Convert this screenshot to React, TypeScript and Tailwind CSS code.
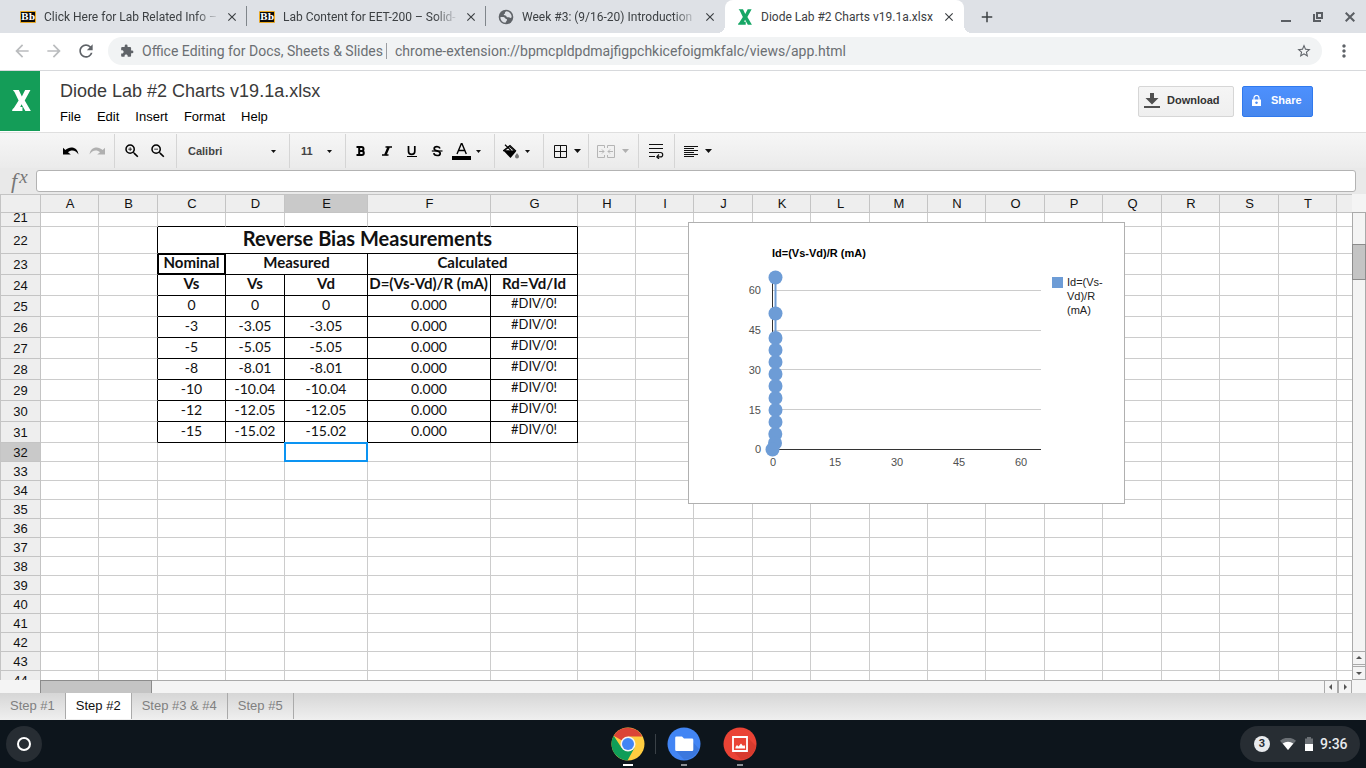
import React from "react";
import {
  MdArrowBack,
  MdArrowForward,
  MdRefresh,
  MdExtension,
  MdStarBorder,
  MdMoreVert,
  MdZoomIn,
  MdZoomOut,
  MdClose,
  MdAdd,
} from "react-icons/md";

/* ---------- Browser window ---------- */

function BlackboardIcon() {
  return (
    <svg width="16" height="12" viewBox="0 0 16 12" aria-hidden="true">
      <rect x="0.5" y="0.5" width="15" height="11" rx="0.5" fill="#0b0b0b" stroke="#eba91f" />
      <text x="8" y="9.3" textAnchor="middle" fontSize="9" fontWeight="700" fill="#fff" fontFamily="'DejaVu Serif', serif">
        Bb
      </text>
    </svg>
  );
}

function GlobeIcon() {
  return (
    <svg width="16" height="16" viewBox="0 0 16 16" aria-hidden="true">
      <circle cx="8" cy="8" r="7.300" fill="#5f6368" />
      <path d="M8.600 2.200c-1.200.3-1.700 1-1.600 1.700.1.700-.6.900-1.100 1.300-.4.400.1 1.300.9 1.300 1 0 1.500.2 1.700.9.200.8 1 .9 1.900.8.900-.1 1.200.7 2 .7.600 0 1-.4 1.300-.9a5.800 5.800 0 0 0-5.100-5.800z" fill="#dee1e6" />
      <path d="M2.300 8.300c1.400-.5 3-.6 4.200.1 1 .6 1 1.400 1.900 1.700.8.300.8 1.300.1 1.900-.7.500-.6 1.300-1.200 1.800a5.800 5.800 0 0 1-5-5.500z" fill="#dee1e6" />
    </svg>
  );
}

function XMark({ color, className }: { color: string; className: string }) {
  return (
    <svg viewBox="0 0 18.5 20.5" className={className} fill={color} aria-hidden="true">
      <path d="M.8 0H6.600L9.600 6.300 12.800 0H18L12.400 10.200 18.400 20.400H13L9.300 14 8 16.600H10.200V20.400H0L.6 18.600 1.800 17.600 6.400 10.200 2.400 2z" />
    </svg>
  );
}

type Tab = { title: string; icon: React.ReactNode; active?: boolean; divider?: boolean };

const tabs: Tab[] = [
  { title: "Click Here for Lab Related Info –", icon: <BlackboardIcon />, divider: true },
  { title: "Lab Content for EET-200 – Solid-", icon: <BlackboardIcon />, divider: true },
  { title: "Week #3: (9/16-20) Introduction", icon: <GlobeIcon /> },
  { title: "Diode Lab #2 Charts v19.1a.xlsx", icon: <XMark color="#16a765" className="h-4 w-[14px]" />, active: true },
];

function TabStrip() {
  return (
    <div className="flex h-[33px] shrink-0 items-stretch bg-[#dee1e6] pl-2 text-[#3c4043]">
      {tabs.map((t) => (
        <div
          key={t.title}
          className={
            t.active
              ? "relative flex w-[239px] items-center rounded-t-lg bg-white pr-[7px] pl-3"
              : "relative flex w-[239px] items-center pr-[7px] pl-3"
          }
        >
          {t.active && (
            <>
              <span className="absolute bottom-0 -left-2 size-2 bg-[radial-gradient(circle_at_0_0,#dee1e6_8px,#fff_8px)]" />
              <span className="absolute -right-2 bottom-0 size-2 bg-[radial-gradient(circle_at_100%_0,#dee1e6_8px,#fff_8px)]" />
            </>
          )}
          <span className="flex w-4 shrink-0 justify-center">{t.icon}</span>
          <span
            className={
              t.active
                ? "ml-2 min-w-0 flex-1 text-[12px] leading-5 whitespace-nowrap"
                : "ml-2 min-w-0 flex-1 text-[12px] leading-5 whitespace-nowrap [mask-image:linear-gradient(to_right,#000_86%,transparent)]"
            }
          >
            {t.title}
          </span>
          <button aria-label={"Close " + t.title} className="ml-1 flex size-4 shrink-0 items-center justify-center">
            <MdClose className="size-[14px]" />
          </button>
          {t.divider && <span className="absolute top-[6px] right-0 h-5 w-px bg-[#80868b]" />}
        </div>
      ))}
      <button aria-label="New tab" className="ml-[13px] flex w-5 items-center justify-center">
        <MdAdd className="size-[18px]" />
      </button>
      <div className="ml-auto flex items-center gap-4 pr-2 text-[#5a5e63]">
        <button aria-label="Minimize" className="flex size-4 items-center justify-center">
          <svg width="10" height="10" viewBox="0 0 10 10"><path d="M0 8h10v2H0z" fill="currentColor" /></svg>
        </button>
        <button aria-label="Restore" className="flex size-4 items-center justify-center">
          <svg width="10" height="10" viewBox="0 0 10 10" fill="none" stroke="currentColor" strokeWidth="2">
            <path d="M4 1h5v5H4zM1 2v7h7" />
          </svg>
        </button>
        <button aria-label="Close window" className="flex size-4 items-center justify-center">
          <svg width="10" height="10" viewBox="0 0 10 10" stroke="currentColor" strokeWidth="2"><path d="M.7.7l8.600 8.600M9.300.7L.7 9.300" /></svg>
        </button>
      </div>
    </div>
  );
}

function AddressRow() {
  return (
    <div className="flex h-[38px] shrink-0 items-center border-b border-[#d7d9dc] bg-white px-3 pb-px">
      <button aria-label="Back" className="flex w-5 justify-center text-[#babcbe]"><MdArrowBack className="size-5" /></button>
      <button aria-label="Forward" className="ml-3 flex w-5 justify-center text-[#babcbe]"><MdArrowForward className="size-5" /></button>
      <button aria-label="Reload" className="ml-3 flex w-5 justify-center text-[#5f6368]"><MdRefresh className="size-5" /></button>
      <div className="ml-3 flex h-7 flex-1 items-center rounded-full bg-[#f1f3f4] px-3 text-sm text-[#6b6f73]">
        <MdExtension className="size-[14px] text-[#5f6368]" />
        <span className="ml-2 whitespace-nowrap">Office Editing for Docs, Sheets &amp; Slides</span>
        <span className="ml-[3px] h-4 w-px bg-[#9a9da1]" />
        <input
          aria-label="Address"
          className="ml-2 min-w-0 flex-1 bg-transparent outline-none"
          defaultValue="chrome-extension://bpmcpldpdmajfigpchkicefoigmkfalc/views/app.html"
        />
        <button aria-label="Bookmark" className="-mr-0.5"><MdStarBorder className="size-4 text-[#5f6368]" /></button>
      </div>
      <button aria-label="Browser menu" className="ml-3 flex w-5 justify-center text-[#5f6368]"><MdMoreVert className="size-5" /></button>
    </div>
  );
}

/* ---------- Document header ---------- */

function DocHeader() {
  return (
    <header className="flex h-[61px] shrink-0 items-start bg-white">
      <div className="flex h-[60px] w-10 shrink-0 items-center justify-center bg-[#149d58] pb-0.5 pl-0.5">
        <XMark color="#fff" className="h-[21px] w-[19px]" />
      </div>
      <div className="ml-5 flex-1 pt-2">
        <h1 className="text-[18px] leading-6 text-[#3a3a3a]">Diode Lab #2 Charts v19.1a.xlsx</h1>
        <nav className="mt-1 flex gap-4 text-[13px] leading-5 text-black">
          {["File", "Edit", "Insert", "Format", "Help"].map((m) => (
            <button key={m}>{m}</button>
          ))}
        </nav>
      </div>
      <div className="flex gap-2 pt-[15px] pr-[53px] text-[11px] font-bold">
        <button className="flex h-[31px] w-[96px] items-center rounded-[2px] border border-[#d6d6d6] bg-linear-to-b from-[#f5f5f5] to-[#efefef] pb-0.5 pl-[5px] text-[#333]">
          <svg width="16" height="16" viewBox="0 0 16 16" fill="#505050" aria-hidden="true">
            <path d="M6 0h4v5h4.500L8 11.500 1.500 5H6zM0 13h16v2H0z" />
          </svg>
          <span className="ml-[7px]">Download</span>
        </button>
        <button className="flex h-[31px] w-[71px] items-center rounded-[2px] border border-[#3079ed] bg-linear-to-b from-[#4d90fe] to-[#4787ed] pb-0.5 pl-[9px] text-white">
          <svg width="9" height="11" viewBox="0 0 9 11" fill="#fff" aria-hidden="true">
            <path d="M2 5V3a2.500 2.500 0 0 1 5 0v2" fill="none" stroke="#fff" strokeWidth="1.200" />
            <path fillRule="evenodd" d="M0 4.500h9V11H0zM4.500 6.400a1.300 1.300 0 1 0 .01 0z" />
          </svg>
          <span className="ml-[10px]">Share</span>
        </button>
      </div>
    </header>
  );
}

/* ---------- Toolbar ---------- */

function Caret({ light }: { light?: boolean }) {
  return (
    <svg width="7" height="4" viewBox="0 0 7 4" className={light ? "shrink-0 text-[#b0b0b0]" : "shrink-0 text-[#111]"} aria-hidden="true">
      <path d="M0 0h7L3.500 4z" fill="currentColor" />
    </svg>
  );
}

function SmallCaret() {
  return (
    <svg width="5" height="3" viewBox="0 0 5 3" className="shrink-0" aria-hidden="true">
      <path d="M0 0h5L2.500 3z" fill="#111" />
    </svg>
  );
}

function UndoShape({ className }: { className: string }) {
  return (
    <svg width="16" height="9" viewBox="0 0 16 9" fill="currentColor" className={className} aria-hidden="true">
      <path d="M0 .8L2.300 3C4.500 1 7 .2 9.300.5 12.600.9 14.800 3 15.500 7.500 13.700 4.600 11.800 3.500 9.400 3.500 7.700 3.500 6.200 4.200 5 5.200L7.800 7.600H0z" />
    </svg>
  );
}

function Toolbar() {
  return (
    <div className="flex h-9 shrink-0 items-stretch border-t border-[#dfdfdf] bg-linear-to-b from-[#f6f6f6] to-[#ebebeb] pt-px text-black">
      <div className="ml-[50px] flex w-[65px] items-center gap-[10px] border-r border-[#d5d5d5] pl-[13px]">
        <button aria-label="Undo"><UndoShape className="text-black" /></button>
        <button aria-label="Redo"><UndoShape className="-scale-x-100 text-[#b0b0b0]" /></button>
      </div>
      <div className="flex w-[62px] items-center gap-2 border-r border-[#d5d5d5] pl-2">
        <button aria-label="Zoom in"><MdZoomIn className="size-[18px]" /></button>
        <button aria-label="Zoom out"><MdZoomOut className="size-[18px]" /></button>
      </div>
      <div className="relative flex w-[113px] items-center border-r border-[#d5d5d5] pr-[13px] pl-[11px] text-[11px] font-bold text-[#444]">
        <select aria-label="Font" className="w-full appearance-none bg-transparent outline-none">
          <option>Calibri</option>
        </select>
        <SmallCaret />
      </div>
      <div className="flex w-[56px] items-center border-r border-[#d5d5d5] pr-[13px] pl-[11px] text-[11px] font-bold text-[#444]">
        <select aria-label="Font size" className="w-full appearance-none bg-transparent outline-none">
          <option>11</option>
        </select>
        <SmallCaret />
      </div>
      <div className="flex w-[149px] items-center border-r border-[#d5d5d5] pl-[3px]">
        <button aria-label="Bold" className="w-[25px]">
          <svg width="10" height="12" viewBox="0 0 10 12" className="ml-[7px]"><path d="M.5 2h5a2 2 0 0 1 0 4h-2.500h2.800a2 2 0 0 1 0 4H.5M3.200 2v8" fill="none" stroke="#000" strokeWidth="2" /></svg>
        </button>
        <button aria-label="Italic" className="w-[25px]">
          <svg width="12" height="12" viewBox="0 0 12 12" className="ml-[7px]"><path d="M4.500 2H11M1 10h6.500" stroke="#000" strokeWidth="1.300" /><path d="M7.700 2L4.300 10" stroke="#000" strokeWidth="2.400" /></svg>
        </button>
        <button aria-label="Underline" className="w-[25px]">
          <svg width="12" height="14" viewBox="0 0 12 14" className="ml-[7px]" fill="none" stroke="#000"><path d="M2.500 2v5.200a3 3 0 0 0 6.300 0V2" strokeWidth="1.700" /><path d="M1 12.500h10" /></svg>
        </button>
        <button aria-label="Strikethrough" className="w-[25px]">
          <svg width="12" height="12" viewBox="0 0 12 12" className="ml-[7px]" fill="none" stroke="#000"><path d="M9 3.600C8.600 2.300 7.600 1.700 6 1.700 4.300 1.700 3.200 2.500 3.200 3.700 3.200 6.400 9.200 5.400 9.200 8.400 9.200 9.700 8 10.500 6.200 10.500 4.300 10.500 3 9.600 2.800 8.200" strokeWidth="1.700" /><path d="M.8 6h10.700" strokeWidth="1.200" /></svg>
        </button>
        <button aria-label="Text color" className="ml-[3px] flex items-center">
          <svg width="19" height="18" viewBox="0 0 19 18"><path d="M5 12L9.300 1.700h.7L14.300 12M6.400 8.500h6.500" fill="none" stroke="#000" strokeWidth="1.400" /><path d="M0 14h19v4H0z" /></svg>
          <span className="ml-[5px]"><SmallCaret /></span>
        </button>
      </div>
      <button aria-label="Fill color" className="flex w-[49px] items-center border-r border-[#d5d5d5] pl-2">
        <svg width="17" height="15" viewBox="0 0 17 15">
          <path d="M.5 6.700L6.700 2 13 7.500 7.500 14z" fill="#000" /><path d="M2.500 6.200L6.500 3.200 10.500 6.400z" fill="#f0f0f0" /><path d="M2 .7L8 6.500M0 7L7 1.500 13 7.200" stroke="#000" strokeWidth="1.200" fill="none" />
          <path d="M14 9c1.200 1.700 2 2.600 2 3.600a2 2 0 0 1-4 0c0-1 .8-1.900 2-3.600z" fill="#777" />
        </svg>
        <span className="ml-[5px]"><SmallCaret /></span>
      </button>
      <button aria-label="Borders" className="flex w-[45px] items-center gap-[7px] border-r border-[#d5d5d5] pl-[10px]">
        <svg width="13" height="13" viewBox="0 0 13 13" fill="none" stroke="#111"><path d="M.5.5h12v12H.5zM6.500.5v12M.5 6.500h12" /></svg>
        <Caret />
      </button>
      <button aria-label="Merge cells" className="flex w-[50px] items-center gap-[7px] border-r border-[#d5d5d5] pl-2 text-[#b5b5b5]">
        <svg width="18" height="13" viewBox="0 0 18 13" fill="none" stroke="currentColor">
          <path d="M7.500 3V.5H.5v12h7V10M10.500 3V.5h7v12h-7V10M2 6.500h5M16 6.500h-5M5 4.500l2 2-2 2M13 4.500l-2 2 2 2" />
        </svg>
        <Caret light />
      </button>
      <button aria-label="Wrap text" className="flex w-9 items-center border-r border-[#d5d5d5] pl-[10px]">
        <svg width="15" height="16" viewBox="0 0 15 16" fill="none" stroke="#111" strokeWidth="1.200">
          <path d="M0 1.500h14M0 5.500h14M0 9.500h11.500a2.200 2.200 0 0 1 0 4.400H8M0 13.500h6M10 11.500L7.800 13.900 10 16" />
        </svg>
      </button>
      <button aria-label="Align" className="flex items-center gap-[7px] pl-[9px]">
        <svg width="14" height="12" viewBox="0 0 14 12" stroke="#111"><path d="M0 1.500h14M0 3.500h10M0 5.500h14M0 7.500h10M0 9.500h14M0 11.500h10" /></svg>
        <Caret />
      </button>
    </div>
  );
}

function FormulaBar() {
  return (
    <label className="flex h-[26px] shrink-0 items-center bg-[#e9e9e9] pr-[10px] pl-[11px]">
      <span className="flex w-[25px] items-start font-['Liberation_Serif',serif] text-[22px] leading-6 text-[#777] italic">
        f<span className="ml-0.5 text-[19px] leading-4">x</span>
      </span>
      <input aria-label="Formula" className="h-[22px] min-w-0 flex-1 rounded-[3px] border border-[#b3b3b3] bg-white px-2 text-[13px] outline-none" />
    </label>
  );
}

/* ---------- Sheet ---------- */

const columns = [
  { name: "A", w: "w-[58px]" },
  { name: "B", w: "w-[59px]" },
  { name: "C", w: "w-[68px]" },
  { name: "D", w: "w-[59px]" },
  { name: "E", w: "w-[83px]" },
  { name: "F", w: "w-[123px]" },
  { name: "G", w: "w-[87px]" },
  { name: "H", w: "w-[58px]" },
  { name: "I", w: "w-[58px]" },
  { name: "J", w: "w-[59px]" },
  { name: "K", w: "w-[58px]" },
  { name: "L", w: "w-[59px]" },
  { name: "M", w: "w-[58px]" },
  { name: "N", w: "w-[58px]" },
  { name: "O", w: "w-[59px]" },
  { name: "P", w: "w-[58px]" },
  { name: "Q", w: "w-[59px]" },
  { name: "R", w: "w-[58px]" },
  { name: "S", w: "w-[59px]" },
  { name: "T", w: "w-[58px]" },
  { name: "", w: "w-[58px]" },
];

function Cols() {
  return (
    <colgroup>
      <col className="w-[41px]" />
      {columns.map((c, i) => (
        <col key={i} className={c.w} />
      ))}
    </colgroup>
  );
}

type Cell = { text?: string; span?: number; kind?: "title" | "head" | "num" | "err"; thick?: boolean; overflow?: boolean };

const measured: [number, string, string, string][] = [
  [25, "0", "0", "0"],
  [26, "-3", "-3.05", "-3.05"],
  [27, "-5", "-5.05", "-5.05"],
  [28, "-8", "-8.01", "-8.01"],
  [29, "-10", "-10.04", "-10.04"],
  [30, "-12", "-12.05", "-12.05"],
  [31, "-15", "-15.02", "-15.02"],
];

const content: Record<number, Cell[]> = {
  22: [{ text: "Reverse Bias Measurements", span: 5, kind: "title" }],
  23: [
    { text: "Nominal", kind: "head", thick: true },
    { text: "Measured", span: 2, kind: "head" },
    { text: "Calculated", span: 2, kind: "head" },
  ],
  24: [
    { text: "Vs", kind: "head" },
    { text: "Vs", kind: "head" },
    { text: "Vd", kind: "head" },
    { text: "ID=(Vs-Vd)/R (mA)", kind: "head", overflow: true },
    { text: "Rd=Vd/Id", kind: "head" },
  ],
};
for (const [row, nominal, vs, vd] of measured) {
  content[row] = [
    { text: nominal, kind: "num" },
    { text: vs, kind: "num" },
    { text: vd, kind: "num" },
    { text: "0.000", kind: "num" },
    { text: "#DIV/0!", kind: "err" },
  ];
}

const cellText = {
  title: "text-[20px] leading-[22px] font-bold",
  head: "text-[15px] leading-[17px] font-bold",
  num: "text-[14px] leading-[17px]",
  err: "text-[13px] leading-[15px]",
};

const rows = Array.from({ length: 24 }, (_, i) => 21 + i);
const blank = "border-r border-b border-[#ccc]";

function SheetRow({ n }: { n: number }) {
  const cells = content[n];
  const height = n === 22 ? "h-[27px]" : cells ? "h-[21px]" : "h-[19px]";
  return (
    <tr className={height}>
      <th
        className={
          n === 32
            ? "border-r border-b border-l border-[#c4c4c4] bg-[#c9c9c9] p-0 pt-0.5 font-normal"
            : "border-r border-b border-l border-[#c4c4c4] bg-[#eee] p-0 pt-0.5 font-normal"
        }
      >
        <div className="-my-1 leading-4">{n}</div>
      </th>
      <td className={blank} />
      <td className={cells ? "border-r border-b border-r-black border-b-[#ccc]" : blank} />
      {cells
        ? cells.map((c, i) => (
            <td
              key={i}
              colSpan={c.span}
              className={
                c.thick
                  ? "border-r border-b border-black p-0 text-center align-top shadow-[inset_0_0_0_1px_#000]"
                  : "border-r border-b border-black p-0 text-center align-top"
              }
            >
              <div
                className={
                  c.overflow
                    ? "mx-0.5 flex justify-end overflow-hidden whitespace-nowrap"
                    : "flex justify-center whitespace-nowrap"
                }
              >
                <span className={"font-['Lato',sans-serif] " + cellText[c.kind!]}>{c.text}</span>
              </div>
            </td>
          ))
        : [0, 1, 2, 3, 4].map((i) =>
            n === 21 ? (
              <td key={i} className="border-r border-b border-r-[#ccc] border-b-black" />
            ) : n === 32 && i === 2 ? (
              <td key={i} className={"relative " + blank}>
                <span className="absolute -inset-px border-2 border-[#0c94f2]" />
              </td>
            ) : (
              <td key={i} className={blank} />
            ),
          )}
      {columns.slice(7).map((_, i) => (
        <td key={i} className={blank} />
      ))}
    </tr>
  );
}

const points: [number, number][] = [
  [86.500, 54.500], [86.500, 90.500], [86.500, 115], [86.500, 127], [86.500, 139], [86.500, 151], [86.500, 163],
  [86.500, 175], [86.500, 187], [86.500, 199], [86.300, 211], [86, 220], [83.500, 226.500],
];

function Chart() {
  return (
    <svg
      viewBox="0 0 435 280"
      className="absolute top-[28px] left-[688px] box-content h-[280px] w-[435px] border border-[#b0b0b0] bg-white"
      fontFamily="'Liberation Sans', Arial, sans-serif"
      fontSize="11"
      role="img"
      aria-label="Id=(Vs-Vd)/R (mA)"
    >
      <text x="83" y="34" fontWeight="700" fill="#000">Id=(Vs-Vd)/R (mA)</text>
      <path d="M84 67.500h268M84 107.500h268M84 146.500h268M84 186.500h268" stroke="#ccc" />
      <path d="M83.500 55v172M83 226.500h269" stroke="#333" fill="none" />
      {[["60", 71], ["45", 111], ["30", 151], ["15", 191], ["0", 230]].map(([t, y]) => (
        <text key={t} x="72" y={y} textAnchor="end" fill="#505050">{t}</text>
      ))}
      {[["0", 84], ["15", 146], ["30", 208], ["45", 270], ["60", 332]].map(([t, x]) => (
        <text key={t} x={x} y="243" textAnchor="middle" fill="#505050">{t}</text>
      ))}
      <polyline points={points.map((p) => p.join(",")).join(" ")} fill="none" stroke="#6d9cd6" strokeWidth="2" />
      {points.map(([x, y]) => (
        <circle key={y} cx={x} cy={y} r="7" fill="#6d9cd6" />
      ))}
      <rect x="363" y="54" width="11" height="11" fill="#6d9cd6" />
      <g fill="#222">
        <text x="378" y="63">Id=(Vs-</text>
        <text x="378" y="77">Vd)/R</text>
        <text x="378" y="91">(mA)</text>
      </g>
    </svg>
  );
}

function Arrow({ d }: { d: string }) {
  return (
    <svg width="6" height="6" viewBox="0 0 6 6" aria-hidden="true"><path d={d} fill="#555" /></svg>
  );
}

function Sheet() {
  return (
    <main className="flex min-h-0 flex-1 flex-col text-[13px] text-[#111]">
      <div className="flex min-h-0 flex-1">
        <div className="relative flex min-w-0 flex-1 flex-col overflow-hidden bg-white">
          <table className="w-[1395px] shrink-0 table-fixed border-separate border-spacing-0">
            <Cols />
            <thead>
              <tr className="h-[19px]">
                <th className="border border-[#c4c4c4] bg-[#eee] p-0" />
                {columns.map((c, i) => (
                  <th
                    key={i}
                    className={
                      c.name === "E"
                        ? "border-y border-r border-[#c4c4c4] bg-[#c9c9c9] p-0 pl-px leading-4 font-normal"
                        : "border-y border-r border-[#c4c4c4] bg-[#eee] p-0 pl-px leading-4 font-normal"
                    }
                  >
                    {c.name}
                  </th>
                ))}
              </tr>
            </thead>
          </table>
          <div className="min-h-0 flex-1 overflow-hidden">
            <table className="-mt-[5px] w-[1395px] table-fixed border-separate border-spacing-0">
              <Cols />
              <tbody>
                {rows.map((n) => (
                  <SheetRow key={n} n={n} />
                ))}
              </tbody>
            </table>
          </div>
          <Chart />
        </div>
        <div className="flex w-[14px] shrink-0 flex-col bg-[#f4f4f4] pt-[18px]">
          <div className="flex flex-1 flex-col border border-b-0 border-[#aaa]">
            <div className="-mx-px mt-[31px] h-9 border border-[#8c8c8c] bg-[#c4c4c4]" />
            <button aria-label="Scroll up" className="mt-auto flex h-[14px] items-center justify-center border-y border-[#aaa]">
              <Arrow d="M3 1l3 3H0z" />
            </button>
            <button aria-label="Scroll down" className="mt-px flex h-[14px] items-center justify-center border-y border-[#aaa]">
              <Arrow d="M3 5l3-3H0z" />
            </button>
          </div>
        </div>
      </div>
      <div className="flex h-[13px] shrink-0 bg-[#f4f4f4] pr-[14px] pl-10">
        <div className="flex flex-1 border-t border-[#aaa]">
          <div className="-mt-px h-[13px] w-28 border border-b-0 border-[#8c8c8c] bg-[#c4c4c4]" />
          <button aria-label="Scroll left" className="ml-auto flex w-[14px] items-center justify-center border-x border-[#aaa]">
            <Arrow d="M1 3l3-3v6z" />
          </button>
          <button aria-label="Scroll right" className="flex w-[14px] items-center justify-center border-x border-[#aaa]">
            <Arrow d="M5 3L2 0v6z" />
          </button>
        </div>
      </div>
    </main>
  );
}

function SheetTabs() {
  return (
    <div className="flex h-[27px] shrink-0 items-start bg-linear-to-b from-[#d6d6d6] to-[#efefef] text-[13px] text-[#808080]">
      {["Step #1", "Step #2", "Step #3 & #4", "Step #5"].map((s) => (
        <button
          key={s}
          className={
            s === "Step #2"
              ? "h-[26px] border-r border-[#aaa] bg-white px-[10px] text-[#111]"
              : "h-[26px] border-r border-[#aaa] px-[10px]"
          }
        >
          {s}
        </button>
      ))}
    </div>
  );
}

/* ---------- Shelf ---------- */

function ShelfApp({ label, active, children }: { label: string; active?: boolean; children: React.ReactNode }) {
  return (
    <button aria-label={label} className="flex w-9 flex-col items-center pt-[7px]">
      {children}
      <span className={active ? "mt-[3px] h-[2px] w-[10px] bg-white" : "mt-[3px] h-[2px] w-[6px] bg-[#8b9095]"} />
    </button>
  );
}

function Shelf() {
  return (
    <footer className="grid h-12 shrink-0 grid-cols-[1fr_auto_1fr] items-center bg-[#0d151c] pr-[6px] pl-[6px]">
      <button aria-label="Launcher" className="flex size-9 items-center justify-center rounded-full bg-[#272d33]">
        <span className="size-[14px] rounded-full border-2 border-white" />
      </button>
      <div className="flex h-12 items-start pl-px">
        <ShelfApp label="Chrome" active>
          <svg width="34" height="34" viewBox="0 0 34 34">
            <circle cx="17" cy="17" r="16.500" fill="#ffcd40" />
            <path d="M17 17L2.700 8.750A16.500 16.500 0 0 1 31.300 9.500H17z" fill="#db4437" />
            <path d="M2.700 8.750A16.500 16.500 0 0 0 16.500 33.500L23.500 20.700 17 17 10.500 20.700z" fill="#0f9d58" />
            <path d="M23.500 20.700L17 24.500 10.500 20.700 17 17z" fill="#0f9d58" />
            <circle cx="17" cy="17" r="7.500" fill="#f5f5f5" />
            <circle cx="17" cy="17" r="6" fill="#4285f4" />
          </svg>
        </ShelfApp>
        <span className="mr-[10px] ml-[9px] mt-[14px] h-5 w-px bg-[#3a4147]" />
        <ShelfApp label="Files">
          <svg width="34" height="34" viewBox="0 0 34 34">
            <circle cx="17" cy="17" r="16.500" fill="#4285f4" />
            <path d="M9 24l8 8.500A16 16 0 0 0 32 22l-6-7z" fill="#3b78de" />
            <path d="M9.500 9.500h5.500l2 2h8a1.300 1.300 0 0 1 1.300 1.300v10a1.300 1.300 0 0 1-1.300 1.300H9.500a1.300 1.300 0 0 1-1.300-1.300v-12a1.300 1.300 0 0 1 1.300-1.300z" fill="#fff" />
          </svg>
        </ShelfApp>
        <span className="w-5" />
        <ShelfApp label="Gallery">
          <svg width="34" height="34" viewBox="0 0 34 34">
            <circle cx="17" cy="17" r="16.500" fill="#ea4335" />
            <path d="M10 24l8 8.500A16 16 0 0 0 33 19l-8-8z" fill="#d83b2e" />
            <path d="M10 10h14v14H10z" fill="#ea4335" stroke="#fff" strokeWidth="1.800" />
            <path d="M12.500 21.500v-1.500l1.500-2 1.500 1.500 2.500-3 2 2.500 1.300-1 .7 1.500v2z" fill="#fff" />
          </svg>
        </ShelfApp>
      </div>
      <button aria-label="Status tray" className="flex h-9 w-[120px] items-center justify-self-end rounded-full bg-[#272d33] pl-[14px] text-[#e8eaed]">
        <span className="flex size-4 items-center justify-center rounded-full bg-[#e8eaed] text-[11px] leading-4 font-bold text-[#272d33]">3</span>
        <svg width="16" height="12" viewBox="0 0 16 12" className="ml-[10px]">
          <path d="M0 2.800a12 12 0 0 1 16 0L8 12z" fill="#6b7075" />
          <path d="M2.700 5.600a8.500 8.500 0 0 1 10.600 0L8 12z" fill="#fff" />
        </svg>
        <svg width="8" height="14" viewBox="0 0 8 14" className="ml-[9px]">
          <path d="M2 0h4v1.500h2V8H0V1.500h2z" fill="#6b7075" />
          <path d="M0 7h8v7H0z" fill="#fff" />
        </svg>
        <span className="ml-[7px] text-sm font-medium">9:36</span>
      </button>
    </footer>
  );
}

export default function App() {
  return (
    <div className="flex h-screen flex-col overflow-hidden font-['Roboto',sans-serif]">
      <TabStrip />
      <AddressRow />
      <div className="flex min-h-0 flex-1 flex-col font-['Liberation_Sans',Arial,sans-serif]">
        <DocHeader />
        <Toolbar />
        <FormulaBar />
        <Sheet />
        <SheetTabs />
      </div>
      <Shelf />
    </div>
  );
}
